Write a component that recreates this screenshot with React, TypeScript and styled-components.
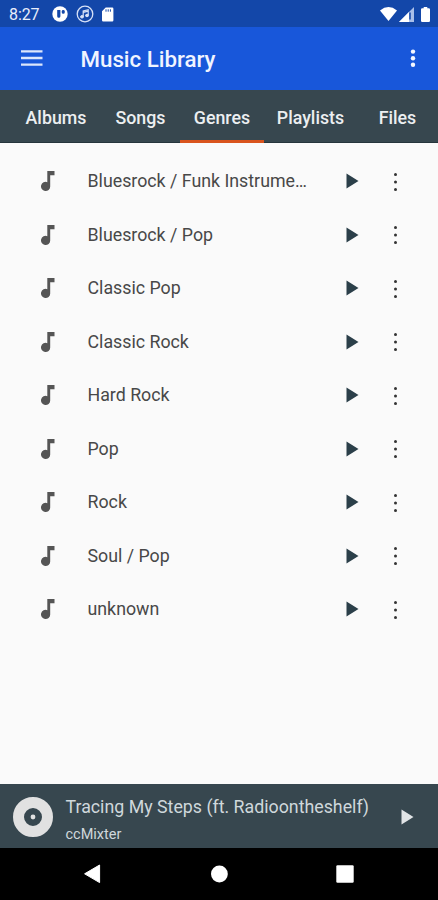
import React from 'react';
import styled, { createGlobalStyle } from 'styled-components';

const Global = createGlobalStyle`
  * { box-sizing: border-box; }
  body { margin: 0; background: #fafafa; font-family: Roboto, "Noto Sans", sans-serif; }
  svg { display: block; flex: none; }
`;

const Screen = styled.div`
  width: 438px;
  height: 900px;
  display: flex;
  flex-direction: column;
  overflow: hidden;
  background: #fafafa;
`;

const StatusBar = styled.header`
  height: 27px;
  flex: none;
  display: flex;
  align-items: center;
  padding: 1px 8.5px 0 9px;
  background: #1347a9;
  color: #e8eefb;
`;

const Clock = styled.span`
  width: 43px;
  padding-top: 1px;
  font-size: 16px;
  line-height: 20px;
  letter-spacing: -0.1px;
`;

const StatusIcons = styled.div<{ $gap: number }>`
  display: flex;
  align-items: center;
  gap: ${(p) => p.$gap}px;
`;

const BatterySlot = styled.div`
  padding-left: 7px;
`;

const Spacer = styled.div`
  flex: 1;
`;

const Toolbar = styled.div`
  height: 63px;
  flex: none;
  display: flex;
  align-items: center;
  padding: 0 22px 2px 21px;
  background: #1857da;
`;

const Title = styled.h1`
  flex: 1;
  margin: 3px 0 0 37.5px;
  font-size: 22.3px;
  font-weight: 500;
  line-height: 28px;
  color: #f0f4ff;
`;

const PlainButton = styled.button`
  display: flex;
  margin: 0;
  padding: 0;
  border: 0;
  background: none;
`;

const Tabs = styled.nav`
  height: 53px;
  flex: none;
  display: flex;
  padding-left: 11px;
  background: #37474f;
  box-shadow: inset 0 -1px 0 #26353c;
`;

const Tab = styled.button<{ $width: number; $active?: boolean }>`
  width: ${(p) => p.$width}px;
  flex: none;
  margin: 0;
  padding: 6px 0 0;
  border: 0;
  border-bottom: 3px solid ${(p) => (p.$active ? '#d9541e' : 'transparent')};
  background: none;
  color: #eceff1;
  font: 500 17.8px/22px Roboto, sans-serif;
  text-align: center;
`;

const List = styled.ul`
  flex: 1;
  margin: 0;
  padding: 11.5px 0 0;
  list-style: none;
`;

const Row = styled.li`
  height: 53.5px;
  display: flex;
  align-items: center;
  padding: 0 38px 0 40px;
`;

const Genre = styled.span`
  width: 226.5px;
  margin-left: 31.5px;
  margin-right: 32px;
  font-size: 17.8px;
  line-height: 24px;
  color: #484848;
  white-space: nowrap;
`;

const RowMenu = styled(PlainButton)`
  margin-left: 34px;
  padding-top: 1px;
`;

const Player = styled.section`
  height: 64px;
  flex: none;
  display: flex;
  align-items: center;
  padding: 2px 24.5px 0 13px;
  background: #37474f;
`;

const TrackInfo = styled.div`
  flex: 1;
  padding: 5px 0 0 12.5px;
  white-space: nowrap;
`;

const TrackTitle = styled.div`
  font-size: 17.8px;
  line-height: 24px;
  color: #cfd8dc;
`;

const Artist = styled.div`
  padding-top: 6px;
  font-size: 14.5px;
  line-height: 20px;
  color: #cfd8dc;
`;

const NavBar = styled.footer`
  height: 52px;
  flex: none;
  display: flex;
  align-items: center;
  justify-content: space-between;
  padding: 0 84px 0 83px;
  background: #000;
`;

const DiscBadge = () => (
  <svg width="16" height="16" viewBox="0 0 16 16">
    <circle cx="8" cy="8" r="7.7" fill="#fff" />
    <path d="M5.2 4h3.2v6.2a1.6 1.6 0 0 1-3.2 0z" fill="#1347a9" />
    <rect x="9.8" y="3.9" width="2.9" height="3.9" rx="1.3" fill="#1347a9" />
  </svg>
);

const MusicBadge = () => (
  <svg width="18" height="18" viewBox="0 0 18 18" fill="none" stroke="#d7e1f7">
    <circle cx="9" cy="9" r="7.8" strokeWidth="1.3" />
    <path d="M7.2 11.5V6l5-1.3v5.6M7.2 7.4l5-1.3" strokeWidth="1.2" />
    <ellipse cx="6" cy="11.8" rx="1.5" ry="1.2" fill="#d7e1f7" />
    <ellipse cx="11" cy="10.5" rx="1.5" ry="1.2" fill="#d7e1f7" />
  </svg>
);

const SdCard = () => (
  <svg width="13" height="15" viewBox="0 0 13 15">
    <path
      d="M4.7.5h6.5a1.2 1.2 0 0 1 1.2 1.2v11.6a1.2 1.2 0 0 1-1.2 1.2h-9A1.2 1.2 0 0 1 1 13.3V4.2z"
      fill="#fff"
    />
    <path d="M5 2.3v2.4M7.2 2.3v2.4M9.4 2.3v2.4" stroke="#1347a9" strokeWidth="1" />
  </svg>
);

const Wifi = () => (
  <svg width="17" height="14" viewBox="0 0 17 14">
    <path d="M8.5 14L0 3.5Q8.5-3.3 17 3.5z" fill="#fff" />
  </svg>
);

const Signal = () => (
  <svg width="15" height="15" viewBox="0 0 15 15">
    <path d="M0 15L15 0v15z" fill="#a9bfe9" />
    <path d="M0 15L10 5v10z" fill="#fff" />
    <path d="M11 5.5v7" stroke="#1347a9" strokeWidth="1.5" />
  </svg>
);

const Battery = () => (
  <svg width="9" height="15" viewBox="0 0 9 15">
    <path
      d="M2.7 0h3.6v1.2h1.5A1.2 1.2 0 0 1 9 2.4v11.4a1.2 1.2 0 0 1-1.2 1.2H1.2A1.2 1.2 0 0 1 0 13.8V2.4a1.2 1.2 0 0 1 1.2-1.2h1.5z"
      fill="#fff"
    />
  </svg>
);

const MenuIcon = () => (
  <svg width="22" height="16" viewBox="0 0 22 16">
    <path d="M0 1.4h21.5M0 8h21.5M0 14.6h21.5" stroke="#dce6fb" strokeWidth="2.3" />
  </svg>
);

const MoreIcon = () => (
  <svg width="6" height="20" viewBox="0 0 6 20" fill="#f4f7ff">
    <circle cx="3" cy="3.6" r="2.2" />
    <circle cx="3" cy="10.2" r="2.2" />
    <circle cx="3" cy="16.8" r="2.2" />
  </svg>
);

const NoteIcon = () => (
  <svg width="16" height="22" viewBox="0 0 16 22" fill="#555">
    <path d="M7.3 1h7.2v4.2h-4.3v11.3a4.6 4.6 0 1 1-2.9-4.3z" />
  </svg>
);

const PlayIcon = ({ color }: { color: string }) => (
  <svg width="13" height="16" viewBox="0 0 13 16">
    <path d="M.5.5L12.5 8 .5 15.5z" fill={color} />
  </svg>
);

const RowDots = () => (
  <svg width="5" height="20" viewBox="0 0 5 20" fill="#333">
    <circle cx="2.5" cy="2.6" r="1.5" />
    <circle cx="2.5" cy="10" r="1.5" />
    <circle cx="2.5" cy="17.4" r="1.5" />
  </svg>
);

const Disc = () => (
  <svg width="40" height="40" viewBox="0 0 40 40">
    <circle cx="20" cy="20" r="14.5" fill="none" stroke="#e1e1e1" strokeWidth="11" />
    <circle cx="20" cy="20" r="2.4" fill="#e1e1e1" />
  </svg>
);

const BackIcon = () => (
  <svg width="18" height="20" viewBox="0 0 18 20">
    <path d="M16.6 1v17.6L1.6 9.8z" fill="#fff" stroke="#fff" strokeLinejoin="round" />
  </svg>
);

const HomeIcon = () => (
  <svg width="18" height="18" viewBox="0 0 18 18">
    <circle cx="9.4" cy="9" r="8.4" fill="#fff" />
  </svg>
);

const RecentsIcon = () => (
  <svg width="18" height="18" viewBox="0 0 18 18">
    <rect x=".3" y=".2" width="17.4" height="17.6" rx="1.2" fill="#fff" />
  </svg>
);

const tabs = [
  { label: 'Albums', width: 90 },
  { label: 'Songs', width: 79 },
  { label: 'Genres', width: 84 },
  { label: 'Playlists', width: 93 },
  { label: 'Files', width: 81 },
];

const genres = [
  'Bluesrock / Funk Instrume…',
  'Bluesrock / Pop',
  'Classic Pop',
  'Classic Rock',
  'Hard Rock',
  'Pop',
  'Rock',
  'Soul / Pop',
  'unknown',
];

export default function App() {
  return (
    <>
      <Global />
      <Screen>
        <StatusBar>
          <Clock>8:27</Clock>
          <StatusIcons $gap={7.5}>
            <DiscBadge />
            <MusicBadge />
            <SdCard />
          </StatusIcons>
          <Spacer />
          <StatusIcons $gap={1.5}>
            <Wifi />
            <Signal />
          </StatusIcons>
          <BatterySlot>
            <Battery />
          </BatterySlot>
        </StatusBar>
        <Toolbar>
          <PlainButton aria-label="Menu">
            <MenuIcon />
          </PlainButton>
          <Title>Music Library</Title>
          <PlainButton aria-label="More">
            <MoreIcon />
          </PlainButton>
        </Toolbar>
        <Tabs>
          {tabs.map((t) => (
            <Tab key={t.label} $width={t.width} $active={t.label === 'Genres'}>
              {t.label}
            </Tab>
          ))}
        </Tabs>
        <List>
          {genres.map((name) => (
            <Row key={name}>
              <NoteIcon />
              <Genre>{name}</Genre>
              <PlainButton aria-label="Play">
                <PlayIcon color="#2b3f49" />
              </PlainButton>
              <RowMenu aria-label="Options">
                <RowDots />
              </RowMenu>
            </Row>
          ))}
        </List>
        <Player>
          <Disc />
          <TrackInfo>
            <TrackTitle>Tracing My Steps (ft. Radioontheshelf)</TrackTitle>
            <Artist>ccMixter</Artist>
          </TrackInfo>
          <PlainButton aria-label="Play">
            <PlayIcon color="#e1e4e6" />
          </PlainButton>
        </Player>
        <NavBar>
          <BackIcon />
          <HomeIcon />
          <RecentsIcon />
        </NavBar>
      </Screen>
    </>
  );
}
